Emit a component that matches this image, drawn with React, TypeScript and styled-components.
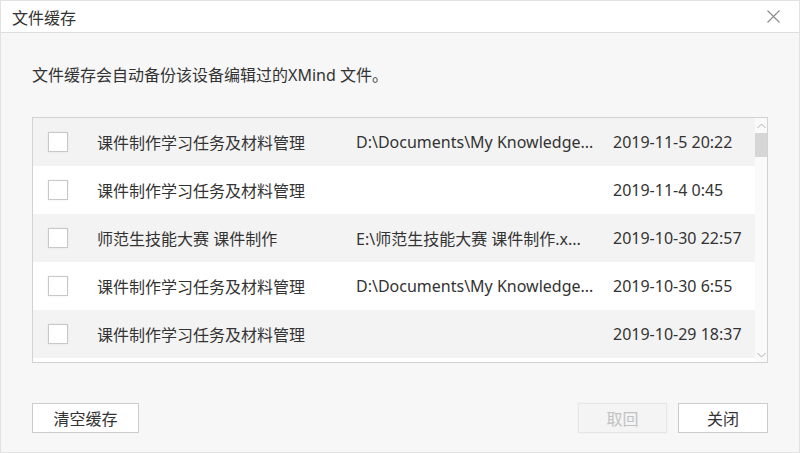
import React from 'react';
import styled, { createGlobalStyle } from 'styled-components';

const GlobalStyle = createGlobalStyle`
  html, body {
    margin: 0;
    padding: 0;
    background: #f7f7f7;
  }
  * {
    box-sizing: border-box;
  }
`;

const Window = styled.div`
  width: 800px;
  height: 453px;
  display: flex;
  flex-direction: column;
  background: #f7f7f7;
  border: 1px solid #e2e2e2;
  font-family: "Noto Sans", "Noto Sans CJK SC", sans-serif;
  color: #333333;
  overflow: hidden;
`;

const TitleBar = styled.div`
  height: 32px;
  flex: none;
  display: flex;
  align-items: center;
  justify-content: space-between;
  padding: 0 16px 0 11px;
  background: #ffffff;
  border-bottom: 1px solid #dddddd;
  font-size: 16px;
`;

const CloseButton = styled.button`
  width: 20px;
  height: 20px;
  padding: 0;
  border: none;
  background: transparent;
  display: flex;
  align-items: center;
  justify-content: center;
  cursor: pointer;
`;

const Body = styled.div`
  flex: 1;
  display: flex;
  flex-direction: column;
  padding: 32px 31px 0 31px;
`;

const Description = styled.div`
  font-size: 16px;
  line-height: 20px;
  height: 20px;
`;

const ListBox = styled.div`
  margin-top: 32px;
  height: 246px;
  display: flex;
  background: #ffffff;
  border: 1px solid #d2d2d2;
`;

const Rows = styled.div`
  flex: 1;
  overflow: hidden;
`;

const Row = styled.div<{ $shaded: boolean }>`
  height: 48px;
  display: grid;
  grid-template-columns: 49px 259px 257px 1fr;
  align-items: center;
  padding-left: 15px;
  background: ${p => (p.$shaded ? '#f3f3f3' : '#ffffff')};
  font-size: 16px;
  white-space: nowrap;
`;

const Check = styled.span`
  width: 20px;
  height: 20px;
  background: #ffffff;
  border: 1px solid #c8c8c8;
  box-shadow: 0 0 2px rgba(0, 0, 0, 0.08);
`;

const Cell = styled.span`
  overflow: hidden;
  text-overflow: clip;
`;

const ScrollBar = styled.div`
  width: 12px;
  flex: none;
  display: flex;
  flex-direction: column;
  align-items: center;
  background: #fafafa;
`;

const Arrow = styled.div`
  height: 15px;
  width: 12px;
  display: flex;
  align-items: center;
  justify-content: center;
`;

const Thumb = styled.div`
  width: 12px;
  height: 24px;
  background: #d6d6d6;
`;

const Track = styled.div`
  flex: 1;
`;

const Footer = styled.div`
  margin-top: 40px;
  display: flex;
  align-items: center;
  gap: 11px;
`;

const Button = styled.button<{ $disabled?: boolean; $width: number }>`
  width: ${p => p.$width}px;
  height: 30px;
  padding: 0;
  font-family: inherit;
  font-size: 16px;
  color: ${p => (p.$disabled ? '#c2c2c2' : '#333333')};
  background: ${p => (p.$disabled ? '#f4f4f4' : '#ffffff')};
  border: 1px solid ${p => (p.$disabled ? '#e6e6e6' : '#cccccc')};
  box-shadow: ${p => (p.$disabled ? '0 0 2px rgba(0,0,0,0.06)' : 'none')};
`;

const Spacer = styled.div`
  flex: 1;
`;

const items = [
  { name: '课件制作学习任务及材料管理', path: 'D:\\Documents\\My Knowledge...', date: '2019-11-5 20:22' },
  { name: '课件制作学习任务及材料管理', path: '', date: '2019-11-4 0:45' },
  { name: '师范生技能大赛 课件制作', path: 'E:\\师范生技能大赛 课件制作.x...', date: '2019-10-30 22:57' },
  { name: '课件制作学习任务及材料管理', path: 'D:\\Documents\\My Knowledge...', date: '2019-10-30 6:55' },
  { name: '课件制作学习任务及材料管理', path: '', date: '2019-10-29 18:37' },
];

const Chevron: React.FC<{ up?: boolean }> = ({ up }) => (
  <svg width="9" height="6" viewBox="0 0 9 6">
    <path
      d={up ? 'M0.5 5 L4.5 1 L8.5 5' : 'M0.5 1 L4.5 5 L8.5 1'}
      fill="none"
      stroke="#b0b0b0"
      strokeWidth="1"
    />
  </svg>
);

const App: React.FC = () => (
  <>
    <GlobalStyle />
    <Window>
      <TitleBar>
        <span>文件缓存</span>
        <CloseButton aria-label="关闭">
          <svg width="13" height="13" viewBox="0 0 13 13">
            <path d="M0.5 0.5 L12.5 12.5 M12.5 0.5 L0.5 12.5" stroke="#8a8a8a" strokeWidth="1.1" />
          </svg>
        </CloseButton>
      </TitleBar>
      <Body>
        <Description>文件缓存会自动备份该设备编辑过的XMind 文件。</Description>
        <ListBox>
          <Rows>
            {items.map((item, i) => (
              <Row key={i} $shaded={i % 2 === 0}>
                <Check />
                <Cell>{item.name}</Cell>
                <Cell>{item.path}</Cell>
                <Cell>{item.date}</Cell>
              </Row>
            ))}
          </Rows>
          <ScrollBar>
            <Arrow>
              <Chevron up />
            </Arrow>
            <Thumb />
            <Track />
            <Arrow>
              <Chevron />
            </Arrow>
          </ScrollBar>
        </ListBox>
        <Footer>
          <Button $width={107}>清空缓存</Button>
          <Spacer />
          <Button $width={89} $disabled>取回</Button>
          <Button $width={90}>关闭</Button>
        </Footer>
      </Body>
    </Window>
  </>
);

export default App;
